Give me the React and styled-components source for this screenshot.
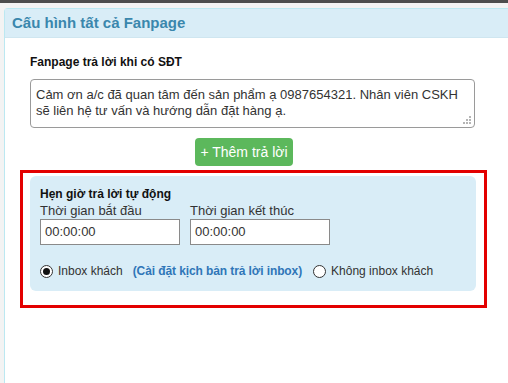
import React from "react";
import styled, { createGlobalStyle } from "styled-components";

const Global = createGlobalStyle`
  html, body { margin: 0; padding: 0; }
  body {
    background: #f3f3f3;
    font-family: "Liberation Sans", Arial, sans-serif;
    width: 508px;
    height: 383px;
    overflow: hidden;
  }
`;

const TopBar = styled.div`
  height: 3px;
  background: #4d4d4d;
`;

const Page = styled.div`
  padding: 5px 0 0 4px;
`;

const Panel = styled.div`
  height: 380px;
  border: 1px solid #bce8f1;
  border-right: none;
  border-radius: 4px 0 0 0;
  background: #fff;
`;

const PanelHeader = styled.div`
  height: 28px;
  background: #d9edf7;
  border-bottom: 1px solid #cfe6f0;
  color: #3a87ad;
  font-weight: bold;
  font-size: 15px;
  line-height: 28px;
  padding-left: 7px;
`;

const PanelBody = styled.div`
  padding: 17px 0 0 15px;
`;

const Column = styled.div`
  margin-left: 10px;
  width: 446px;
`;

const FieldTitle = styled.div`
  font-weight: bold;
  font-size: 12px;
  line-height: 14px;
  color: #111;
`;

const MessageBox = styled.div`
  position: relative;
  margin-top: 10px;
  width: 445px;
  height: 49px;
  box-sizing: border-box;
  border: 1px solid #9a9a9a;
  border-radius: 4px;
  padding: 7px 5px;
  font-size: 13px;
  line-height: 16px;
  color: #333;
`;

const Grip = styled.svg`
  position: absolute;
  right: 3px;
  bottom: 3px;
`;

const AddButton = styled.button`
  display: block;
  margin: 10px 0 0 165px;
  width: 98px;
  height: 28px;
  border: none;
  border-radius: 4px;
  background: #5cb85c;
  color: #fff;
  font-family: "Liberation Sans", Arial, sans-serif;
  font-size: 14px;
  padding: 0;
`;

const Highlight = styled.div`
  margin-top: 4px;
  width: 467px;
  box-sizing: border-box;
  border: 3px solid #e30000;
  padding: 3px 8px 14px 7px;
`;

const ScheduleBox = styled.div`
  background: #d9edf7;
  border-radius: 6px;
  height: 115px;
  box-sizing: border-box;
  padding: 11px 10px 0;
`;

const TimeRow = styled.div`
  display: flex;
  gap: 10px;
  margin-top: 2px;
`;

const TimeField = styled.div`
  display: flex;
  flex-direction: column;
`;

const TimeLabel = styled.div`
  font-size: 13px;
  line-height: 16px;
  color: #333;
`;

const TimeInput = styled.div`
  width: 140px;
  height: 26px;
  box-sizing: border-box;
  border: 1px solid #8a8a8a;
  background: #fff;
  font-size: 13px;
  line-height: 24px;
  padding-left: 4px;
  color: #333;
`;

const RadioRow = styled.div`
  display: flex;
  align-items: center;
  margin-top: 19px;
  font-size: 12px;
  color: #333;
`;

const RadioItem = styled.span`
  display: inline-flex;
  align-items: center;
  gap: 5px;
  margin-right: ${(p) => p.$gap || 0}px;
`;

const Radio = styled.span`
  width: 11px;
  height: 11px;
  border: 1px solid #333;
  border-radius: 50%;
  background: #fff;
  display: inline-flex;
  align-items: center;
  justify-content: center;
  &::after {
    content: "";
    width: 7px;
    height: 7px;
    border-radius: 50%;
    background: ${(p) => (p.$checked ? "#111" : "transparent")};
  }
`;

const Link = styled.span`
  font-weight: bold;
  color: #2f76b8;
  margin-right: 11px;
  letter-spacing: -0.1px;
`;

export default function App() {
  return (
    <>
      <Global />
      <TopBar />
      <Page>
        <Panel>
          <PanelHeader>Cấu hình tất cả Fanpage</PanelHeader>
          <PanelBody>
            <Column>
              <FieldTitle>Fanpage trả lời khi có SĐT</FieldTitle>
              <MessageBox>
                Cảm ơn a/c đã quan tâm đến sản phẩm ạ 0987654321. Nhân viên CSKH
                sẽ liên hệ tư vấn và hướng dẫn đặt hàng ạ.
                <Grip width="8" height="8" viewBox="0 0 8 8">
                  <g fill="#b5b5b5">
                    <rect x="6" y="0" width="2" height="2" />
                    <rect x="3" y="3" width="2" height="2" />
                    <rect x="6" y="3" width="2" height="2" />
                    <rect x="0" y="6" width="2" height="2" />
                    <rect x="3" y="6" width="2" height="2" />
                    <rect x="6" y="6" width="2" height="2" />
                  </g>
                </Grip>
              </MessageBox>
              <AddButton>+ Thêm trả lời</AddButton>
            </Column>
            <Highlight>
              <ScheduleBox>
                <FieldTitle>Hẹn giờ trả lời tự động</FieldTitle>
                <TimeRow>
                  <TimeField>
                    <TimeLabel>Thời gian bắt đầu</TimeLabel>
                    <TimeInput>00:00:00</TimeInput>
                  </TimeField>
                  <TimeField>
                    <TimeLabel>Thời gian kết thúc</TimeLabel>
                    <TimeInput>00:00:00</TimeInput>
                  </TimeField>
                </TimeRow>
                <RadioRow>
                  <RadioItem $gap={10}>
                    <Radio $checked />
                    Inbox khách
                  </RadioItem>
                  <Link>(Cài đặt kịch bản trả lời inbox)</Link>
                  <RadioItem>
                    <Radio />
                    Không inbox khách
                  </RadioItem>
                </RadioRow>
              </ScheduleBox>
            </Highlight>
          </PanelBody>
        </Panel>
      </Page>
    </>
  );
}
